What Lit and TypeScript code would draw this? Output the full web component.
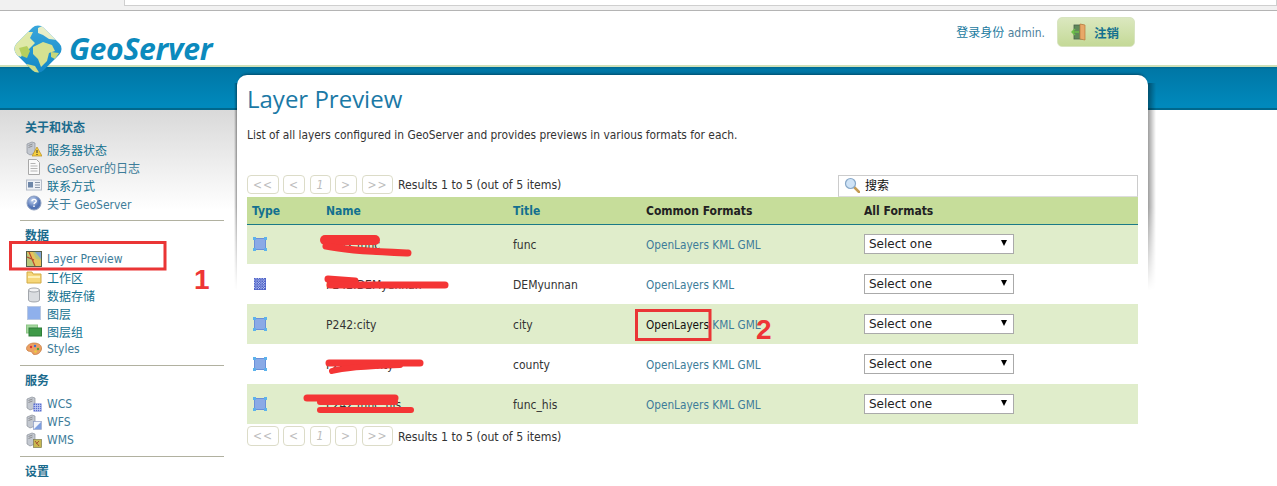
import { LitElement, html, css, svg } from "lit";
import { customElement } from "lit/decorators.js";

const server = (badge: unknown) => svg`<svg class="ic" viewBox="0 0 16 16">
  <path d="M1 3l5-2 3 1v10l-5 2-3-2z" fill="#c3c8d0" stroke="#8b909a" stroke-width=".7"/>
  <path d="M2.5 4.5l4-1.500M2.500 6.500l4-1.500" stroke="#777" stroke-width=".7"/>${badge}</svg>`;

const ICONS: Record<string, unknown> = {
  status: server(svg`<path d="M11 6l5 9H6z" fill="#f6cf3f" stroke="#b98d1c" stroke-width=".7"/><path d="M11 9v3M11 13v1" stroke="#333" stroke-width="1"/>`),
  doc: svg`<svg class="ic" viewBox="0 0 16 16"><path d="M2.5.5h8l3 3v12h-11z" fill="#fafafa" stroke="#a8a8a8"/><path d="M4.5 4.5h5M4.5 7h7M4.5 9.5h7M4.5 12h7" stroke="#b5b5b5"/></svg>`,
  card: svg`<svg class="ic" viewBox="0 0 16 16"><rect x=".5" y="3" width="15" height="10" fill="#eef1f6" stroke="#b4bcc8"/><rect x="2" y="5" width="5" height="5.5" fill="#6d86a8"/><path d="M9 5.5h5M9 8h5M9 10.5h5" stroke="#8a96a8"/></svg>`,
  help: svg`<svg class="ic" viewBox="0 0 16 16"><defs><radialGradient id="h" cx=".4" cy=".3"><stop offset="0" stop-color="#c6d6f2"/><stop offset="1" stop-color="#5273b4"/></radialGradient></defs><circle cx="8" cy="8" r="7" fill="url(#h)" stroke="#8ea0c0"/><path d="M6 6.2c0-2.4 4.2-2.4 4.2 0 0 1.6-2.2 1.4-2.2 3M8 10.6v1.4" fill="none" stroke="#fff" stroke-width="1.4"/></svg>`,
  preview: svg`<svg class="ic" viewBox="0 0 16 16"><rect x=".5" y=".5" width="15" height="15" fill="#b7c77a" stroke="#55604a"/><path d="M1 1h6l3 7 5 1v6H9z" fill="#e8c25c"/><path d="M9 1h6v7z" fill="#7fa3d4"/><path d="M3 1l6 14M1 6l7 3" stroke="#b6492f" stroke-width="1.2"/></svg>`,
  folder: svg`<svg class="ic" viewBox="0 0 16 16"><path d="M1 3h5l1 2h8v9H1z" fill="#f6d77a" stroke="#d2aa45"/><path d="M2 7h12v2H2z" fill="#fdf0b8"/></svg>`,
  db: svg`<svg class="ic" viewBox="0 0 16 16"><path d="M2.5 3v10c0 2.600 11 2.600 11 0V3z" fill="#d9dce0" stroke="#a2a6ac"/><ellipse cx="8" cy="3" rx="5.500" ry="2" fill="#f2f3f5" stroke="#a2a6ac"/></svg>`,
  layer: svg`<svg class="ic" viewBox="0 0 16 16"><rect x="1.500" y="1.500" width="13" height="13" fill="#8fb0ec" stroke="#b9c8e2"/></svg>`,
  group: svg`<svg class="ic" viewBox="0 0 16 16"><rect x=".5" y="2" width="11" height="8" fill="#a7d8a0" stroke="#8cc585"/><rect x="3" y="5" width="12.500" height="8" fill="#3f9a48" stroke="#2f7d38"/></svg>`,
  palette: svg`<svg class="ic" viewBox="0 0 16 16"><path d="M8 2c5 0 8 2.500 7.500 6-.5 3.500-4 6-7.500 5.500-2-.3-1-2.500-3-2.800C3 10.400.5 10 .5 7.500.5 4.500 4 2 8 2z" fill="#eba063" stroke="#c47a3c" stroke-width=".7"/><circle cx="5" cy="6" r="1.200" fill="#d33"/><circle cx="9" cy="5" r="1.200" fill="#3a6fd0"/><circle cx="12" cy="8" r="1.200" fill="#4aa53c"/><circle cx="9.500" cy="10.500" r="1.200" fill="#e8d040"/></svg>`,
  wcs: server(svg`<rect x="7.500" y="7.500" width="8" height="8" fill="#5a6fd0"/><path d="M7.500 9.500h8M7.500 11.500h8M7.500 13.500h8M9.500 7.500v8M11.500 7.500v8M13.500 7.500v8" stroke="#c3cdf2" stroke-width=".8"/>`),
  wfs: server(svg`<rect x="7.500" y="7.500" width="8" height="8" fill="#f4f6fb" stroke="#8b9bc4" stroke-width=".7"/><path d="M8 15l7-7v7z" fill="#7f9fe0"/>`),
  wms: server(svg`<rect x="7.500" y="7.500" width="8" height="8" fill="#c8b850" stroke="#7d7d50" stroke-width=".7"/><path d="M9 9l4 5M13 9l-3 3" stroke="#a8552e"/>`),
};

const polygon = svg`<svg class="ty" viewBox="0 0 16 16"><rect x="2.500" y="2.500" width="11" height="11" fill="#8aaae6" stroke="#6b90d8"/><g fill="#5cb2ec"><rect x="1" y="1" width="3" height="3"/><rect x="12" y="1" width="3" height="3"/><rect x="1" y="12" width="3" height="3"/><rect x="12" y="12" width="3" height="3"/></g></svg>`;
const raster = svg`<svg class="ty" viewBox="0 0 16 16"><rect x="2" y="2" width="12" height="12" fill="#4f63c8"/><path d="M2 4h12M2 6.500h12M2 9h12M2 11.500h12M4 2v12M6.500 2v12M9 2v12M11.500 2v12" stroke="#b9c4ee" stroke-width="1" stroke-dasharray="1.200 1.300"/></svg>`;

const SECTIONS = [
  { title: "关于和状态", items: [["status", "服务器状态"], ["doc", "GeoServer的日志"], ["card", "联系方式"], ["help", "关于 GeoServer"]] },
  { title: "数据", items: [["preview", "Layer Preview"], ["folder", "工作区"], ["db", "数据存储"], ["layer", "图层"], ["group", "图层组"], ["palette", "Styles"]] },
  { title: "服务", items: [["wcs", "WCS"], ["wfs", "WFS"], ["wms", "WMS"]] },
];

const ROWS = [
  { t: polygon, name: "P242:func", title: "func", gml: true },
  { t: raster, name: "P242:DEMyunnan", title: "DEMyunnan", gml: false },
  { t: polygon, name: "P242:city", title: "city", gml: true, hover: true },
  { t: polygon, name: "P242:county", title: "county", gml: true },
  { t: polygon, name: "P242:func_his", title: "func_his", gml: true },
];

@customElement("app-root")
export class AppRoot extends LitElement {
  static styles = css`
    :host { display: block; position: relative; width: 1277px; height: 486px; overflow: hidden; background: #fff;
      font-family: "DejaVu Sans Condensed", "DejaVu Sans", "Noto Sans CJK SC", sans-serif; font-stretch: condensed; font-size: 12px; color: #333; }
    .chrome { height: 10px; background: #f1f1f1; border-bottom: 1px solid #b4b4b4; padding-left: 124px; }
    .addr { height: 5px; background: #fff; border: 1px solid #cfcfcf; border-top: 0; }
    .header { height: 54px; display: flex; align-items: flex-start; padding-left: 13px; position: relative; }
    .logo { width: 50px; height: 50px; margin-top: 13px; position: relative; z-index: 2; flex: none; }
    .brand { font: italic 700 30.200px/1 "Open Sans", sans-serif; font-stretch: normal; color: #0c8abd; margin: 23px 0 0 6px; letter-spacing: -.3px; }
    .login { margin-left: auto; margin-right: 142px; display: flex; align-items: flex-start; }
    .who { color: #1a7aa0; margin-top: 12px; font-size: 12px; }
    .who span { color: #4d7f9c; }
    .logout { margin: 6px 0 0 12px; width: 78px; height: 30px; box-sizing: border-box; border-radius: 5px; background: linear-gradient(#dbe8bf, #c4d997);
      display: flex; align-items: center; gap: 7px; padding-left: 13px; font-weight: 700; font-size: 12.500px; color: #13708f; border: 1px solid #d8e4c0; }
    .logout svg { width: 16px; height: 18px; }
    .band { height: 41px; border-top: 2px solid #cfe0b8; background: linear-gradient(#006a92 0, #0077a6 6%, #0089bc 94%); border-bottom: 2px solid #00678c; }
    .main { display: flex; position: relative; }
    .side { width: 237px; box-sizing: border-box; flex: none; padding: 9px 13px 0 20px; height: 376px; background: linear-gradient(#d9d9d9, #fff 100px); }
    .sec { border-bottom: 1px solid #b1b1a0; padding: 0 0 7px 0; margin-bottom: 6px; }
    .sec:first-child { padding-bottom: 8px; }
    .sec:first-child .items { margin-top: 3px; }
    .sec h4, .sec5 { margin: 0; height: 18px; line-height: 18px; font-size: 12px; font-weight: 700; color: #1b6b8d; padding-left: 5px; }
    .items { margin-top: 5px; }
    .item { height: 18px; display: flex; align-items: center; gap: 5px; padding-left: 6px; color: #3d7c99; white-space: nowrap; }
    .cj { color: #12708f; }
    .ic { width: 16px; height: 16px; flex: none; }
    .card { position: relative; margin-top: -35px; width: 911px; box-sizing: border-box; height: 400px; background: #fff; border-radius: 10px 10px 0 0; padding: 0 10px; box-shadow: 0 -4px 3px -3px rgba(0,40,60,.6); }
    .shade { position: absolute; top: 8px; width: 8px; height: 207px; }
    .shade.r { left: 100%; background: linear-gradient(to right, rgba(0,0,0,.38), rgba(0,0,0,0)); -webkit-mask-image: linear-gradient(#000 60%, transparent); }
    .shade.l { right: 100%; width: 3px; background: linear-gradient(to left, rgba(0,0,0,.38), rgba(0,0,0,0)); -webkit-mask-image: linear-gradient(#000 60%, transparent); }
    h1 { margin: 0; padding-top: 8px; height: 32px; font: 400 24px/32px "Open Sans", sans-serif; font-stretch: normal; color: #1b79a6; }
    .desc { margin: 12px 0 0; height: 16px; line-height: 16px; color: #333; font-size: 11.850px; }
    .tools { display: flex; justify-content: space-between; align-items: flex-end; margin-top: 31px; height: 23px; }
    .pager { display: flex; align-items: center; height: 19px; margin-bottom: 3px; }
    .pb { height: 19px; box-sizing: border-box; border: 1px solid #dcdcc8; border-radius: 4px; display: flex; align-items: center; justify-content: center; color: #bdbdbd; margin-right: 4px; letter-spacing: 1px; }
    .w1 { width: 32px; margin-right: 4px; } .w2 { width: 22px; margin-right: 5px; } .w3 { width: 21px; font-style: italic; } .w4 { width: 22px; margin-right: 5px; } .w5 { width: 31px; }
    .pager span { margin-left: 1px; white-space: nowrap; font-size: 12.200px; }
    .search { width: 300px; height: 22px; box-sizing: border-box; border: 1px solid #ccc; border-bottom-color: #ddd; display: flex; align-items: center; gap: 5px; padding: 0 0 3px 5px; background: #fff; }
    .search svg { width: 16px; height: 16px; }
    .search input { border: 0; outline: 0; padding: 0; width: 200px; font: 12px "Noto Sans CJK SC", sans-serif; color: #111; background: transparent; }
    table { border-collapse: collapse; width: 891px; table-layout: fixed; }
    th, td { box-sizing: border-box; }
    th { height: 27px; background: #c6dd9a; text-align: left; padding: 1px 0 0 5px; font-weight: 700; color: #222; border-bottom: 1px solid #1b7a86; }
    th.t { color: #13708f; }
    td { height: 40px; padding: 1px 0 0 5px; }
    tr.odd td { background: #e0edcb; }
    .ty { width: 16px; height: 16px; display: block; margin-top: -1px; }
    a { color: #3d7c99; text-decoration: none; font-size: 11.700px; }
    a.hov { color: #111; }
    .sel { position: relative; width: 150px; height: 20px; margin-top: -1px; }
    select { appearance: none; -webkit-appearance: none; width: 150px; height: 20px; box-sizing: border-box; border: 1px solid #aaa; background: #fff; border-radius: 0; padding: 0 0 1px 4px; font: 12px "DejaVu Sans", sans-serif; color: #222; outline: 0; }
    .sel::after { content: ""; position: absolute; right: 7px; top: 6px; border: 3.500px solid transparent; border-top: 6px solid #000; border-bottom: 0; }
    .pager.bot { margin: 2px 0 0; height: 20px; }
    .pager.bot .pb { height: 20px; }
    .pager.bot span { padding-top: 1px; }
    .ann { position: absolute; left: 0; top: 0; width: 1277px; height: 486px; pointer-events: none; z-index: 5; }
    .ann text { font: 700 28px "Liberation Sans", sans-serif; fill: #ee3535; }
    .ann path { fill: none; stroke: #f43535; stroke-linecap: round; stroke-linejoin: round; }
    .ann path.box { stroke: #ea3535; stroke-linecap: butt; stroke-linejoin: miter; stroke-width: 3px; }
  `;

  pager(bot = false) {
    return html`<div class="pager ${bot ? "bot" : ""}">
      <div class="pb w1">&lt;&lt;</div><div class="pb w2">&lt;</div><div class="pb w3">1</div><div class="pb w4">&gt;</div><div class="pb w5">&gt;&gt;</div>
      <span>Results 1 to 5 (out of 5 items)</span></div>`;
  }

  render() {
    return html`
      <div class="chrome"><div class="addr"></div></div>
      <div class="header">
        <svg class="logo" viewBox="0 0 50 50">
          <defs>
            <clipPath id="dia"><rect x="6" y="6" width="38" height="38" rx="8" transform="rotate(45 25 25)"/></clipPath>
            <linearGradient id="sea" x1="0" y1="0" x2="0" y2="1"><stop offset="0" stop-color="#3aa7dc"/><stop offset="1" stop-color="#1287c6"/></linearGradient>
          </defs>
          <g clip-path="url(#dia)">
            <rect width="50" height="50" fill="url(#sea)"/>
            <path d="M0 8h20l-3 6 5 5-6 6-5 2-3 6-8-3z" fill="#dfe9a9"/>
            <path d="M6 24l8-2 3 5-3 7-5-2z" fill="#b5cf5e"/>
            <path d="M20 23l10-5 9 3 3 6-6 2-2 8-6 6-3-8-5-5z" fill="#d6e191"/>
            <path d="M14 40l8 2 5 8H12z" fill="#cfdc88"/>
            <path d="M25 4l6-3 8 6 5 9-8-1-6-4-5-2z" fill="#e9efc9"/>
            <path d="M38 28l8 1-4 6-4-2z" fill="#c7d77a"/>
          </g>
        </svg>
        <div class="brand">GeoServer</div>
        <div class="login">
          <div class="who">登录身份 <span>admin.</span></div>
          <div class="logout">
            <svg viewBox="0 0 16 18"><rect x="3" y="2" width="9" height="14" fill="#5f8a5a" stroke="#47604a" stroke-width=".8"/><path d="M9 1l5 1v15l-5-1z" fill="#e8a868" stroke="#b87a3c" stroke-width=".7"/><path d="M8 9H1M4 6L1 9l3 3" fill="none" stroke="#6cc04a" stroke-width="1.500"/></svg>
            注销
          </div>
        </div>
      </div>
      <div class="band"></div>
      <div class="main">
        <aside class="side">
          ${SECTIONS.map((s) => html`<div class="sec">
            <h4>${s.title}</h4>
            <div class="items">${s.items.map(([ic, label]) => html`<div class="item ${/[一-龥]/.test(label) && !/Geo/.test(label) ? "cj" : ""}">${ICONS[ic]}<span>${label}</span></div>`)}</div>
          </div>`)}
          <div class="sec5">设置</div>
        </aside>
        <section class="card">
          <div class="shade r"></div><div class="shade l"></div>
          <h1>Layer Preview</h1>
          <p class="desc">List of all layers configured in GeoServer and provides previews in various formats for each.</p>
          <div class="tools">
            ${this.pager()}
            <label class="search">
              <svg viewBox="0 0 16 16"><path d="M10 10l5 5" stroke="#c59a52" stroke-width="2.500" stroke-linecap="round"/><circle cx="6.500" cy="6.500" r="5" fill="#cfe3f6" stroke="#88a8c8" stroke-width="1.200"/></svg>
              <input value="搜索" aria-label="搜索"/>
            </label>
          </div>
          <table>
            <colgroup><col style="width:74px"/><col style="width:187px"/><col style="width:133px"/><col style="width:218px"/><col/></colgroup>
            <thead><tr><th class="t">Type</th><th class="t">Name</th><th class="t">Title</th><th>Common Formats</th><th>All Formats</th></tr></thead>
            <tbody>
              ${ROWS.map((r, i) => html`<tr class="${i % 2 === 0 ? "odd" : ""}">
                <td>${r.t}</td><td>${r.name}</td><td>${r.title}</td>
                <td><a class="${r.hover ? "hov" : ""}">OpenLayers</a> <a>KML</a>${r.gml ? html` <a>GML</a>` : ""}</td>
                <td><div class="sel"><select aria-label="format"><option>Select one</option></select></div></td>
              </tr>`)}
            </tbody>
          </table>
          ${this.pager(true)}
        </section>
      </div>
      <svg class="ann" viewBox="0 0 1277 486">
        <path class="box" d="M10.500 242.500H165V269H10.500z"/>
        <path class="box" d="M636.500 310.500H710V339.500H636.500z"/>
        <text x="194" y="289">1</text>
        <text x="756" y="339">2</text>
        <path d="M325 240H375" stroke-width="10"/>
        <path d="M326 246C350 251 380 252 408 253" stroke-width="7"/>
        <path d="M328 279L355 281" stroke-width="7"/><path d="M330 285L445 285" stroke-width="7"/>
        <path d="M329 363H420" stroke-width="7"/><path d="M332 371C345 367 370 366 400 365" stroke-width="6"/>
        <path d="M307 398H395" stroke-width="7"/><path d="M320 402H395" stroke-width="6"/><path d="M320 410H411" stroke-width="6"/>
      </svg>
    `;
  }
}
